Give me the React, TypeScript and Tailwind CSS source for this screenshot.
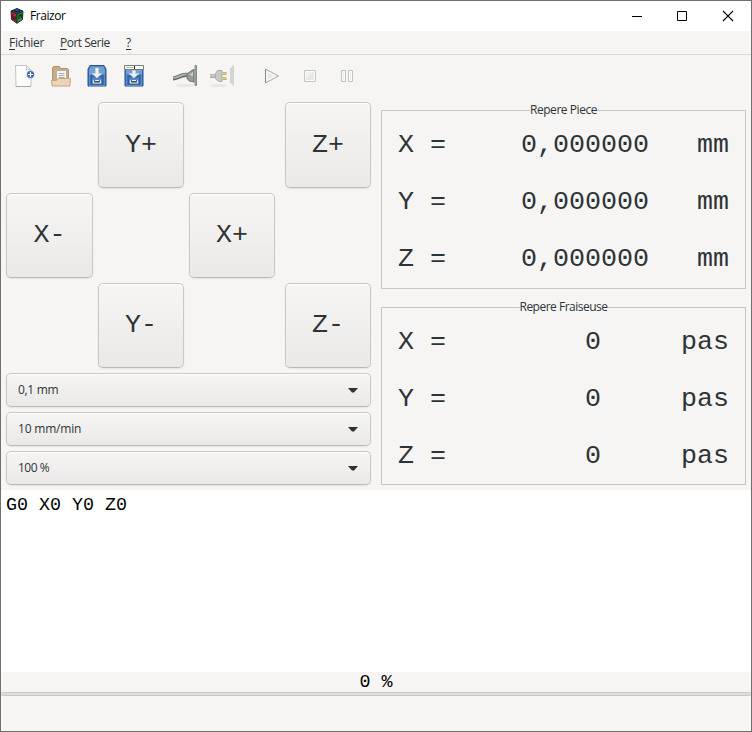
import React from "react";

const mono = "font-['Liberation_Mono',monospace]";
const ui = "font-['Open_Sans','Noto_Sans',sans-serif]";

function Logo() {
  return (
    <svg width="14" height="16" viewBox="0 0 14 16">
      <path d="M7 .5 12.6 3 7 6.2 1.2 3z" fill="#2f5592" stroke="#16233f" />
      <path d="M1 3.3 7 6.5v8.7L1.6 11.6z" fill="#c92f37" stroke="#38181c" />
      <path d="M13 3.3 7 6.5v8.7l5.4-3.6z" fill="#26a036" stroke="#12351b" />
      <path d="M4 2.5 7.2 4 10 2.4M3 6.2v4.2l2 1.2V8.2M9 11V7.8l2.2-1.2v3.5" fill="none" stroke="#171d28" strokeWidth="1.2" />
    </svg>
  );
}

function NewIcon() {
  return (
    <svg width="24" height="24" viewBox="0 0 24 24">
      <path d="M3.5 1.5h11l4.500 4.500v16.500h-15z" fill="#fcfcfb" stroke="#c3c5c0" />
      <path d="M4 22.5h14.500" stroke="#a4a6a1" />
      <path d="M14 1.500c.8 2 .6 3.500 0 4.500 1.500-.5 3.500-.3 4.500.3" fill="#ebebea" stroke="#c5c7c2" />
      <circle cx="18.500" cy="10.500" r="3.900" fill="#8fadd2" />
      <circle cx="18.500" cy="10.500" r="3.200" fill="#3465a4" />
      <path d="M18.500 8v5M16 10.500h5" stroke="#fff" strokeWidth="1.200" />
    </svg>
  );
}

function OpenIcon() {
  return (
    <svg width="24" height="24" viewBox="0 0 24 24">
      <path d="M3.500 21V4l1-1.500h6l1.200 2H18.500l1 1V21z" fill="#c9ad82" stroke="#b0956c" />
      <path d="M7.500 6.500h10v9h-10z" fill="#f8f8f7" stroke="#b1afa8" />
      <path d="M9.500 9.500h6M9.500 11.500h6M9.500 13.500h6" stroke="#a9aaa7" />
      <path d="M2.500 16.500h5l2-2h12l-.6 7.500H3.200z" fill="#ecd4b5" stroke="#c4a77f" />
    </svg>
  );
}

function SaveIcon({ as = false }: { as?: boolean }) {
  return (
    <svg width="24" height="24" viewBox="0 0 24 24">
      <path d="M5 1.500h14l2 3.500v17h-18V5z" fill="#3b70b5" stroke="#285592" strokeLinejoin="round" />
      <path d="M5.500 2.500h13l1.500 3v5H4v-5z" fill="#759fd2" />
      <path d="M4.500 11v10.500h15V11" fill="none" stroke="#5d8dc7" />
      <path d="M6.500 12.500h11v7.500h-11z" fill="#4a7fc1" stroke="#2d5d9c" />
      {as ? (
        <>
          <path d="M2.500 1.500h19v4h-19z" fill="#fff" stroke="#777b76" />
          <path d="M4 3.500h7" stroke="#b5b6b2" />
          <path d="M12.500 2v3" stroke="#222" />
        </>
      ) : null}
      <path
        d={as ? "M10.500 6.500h3v3h3.500L12 14l-5-4.500h3.500z" : "M10.500 4h3v5.500h3.500L12 14l-5-4.500h3.500z"}
        fill="#eff1f1"
        stroke="#c7d1dc"
        strokeWidth=".7"
      />
      <path d="M8.500 15.500v3.500h7v-3.500z" fill="#33475f" stroke="#eef0f1" strokeWidth="1.200" />
      <path d="M8 15.700h8" stroke="#4a7fc1" strokeWidth="1.200" />
      <path d="M10 16.500h4" stroke="#eef0f1" />
    </svg>
  );
}

function ConnectIcon() {
  return (
    <svg width="26" height="24" viewBox="0 0 26 24">
      <ellipse cx="12" cy="21.500" rx="9" ry="1.600" fill="#e8e7e5" />
      <path d="M0 14.500c5 0 7-4 14-3.500" fill="none" stroke="#666965" strokeWidth="4.200" />
      <path d="M.5 14c5 0 7-4 14-3.500" fill="none" stroke="#b3b6b1" strokeWidth="1.800" />
      <path d="M14 9.500c2-.4 4-3 7-4.200v12.700c-3.500-.3-6-1-7-4z" fill="#999d98" stroke="#6e716d" />
      <path d="M16 10.500c2 0 2.500-1.500 4-2.500v4z" fill="#d4d6d2" />
      <path d="M22 1.500h1.500v20H22z" fill="#b1b5ac" stroke="#868b82" />
    </svg>
  );
}

function DisconnectIcon() {
  return (
    <svg width="26" height="24" viewBox="0 0 26 24">
      <ellipse cx="8.500" cy="21.500" rx="8.500" ry="1.600" fill="#e8e7e5" />
      <path d="M0 12h7" stroke="#aeb0ac" strokeWidth="4" />
      <path d="M0 11.500h7" stroke="#d1d2cf" strokeWidth="1.500" />
      <path d="M5.500 9.500 7.500 6.500H12v11H9.500q-3-1-4-3z" fill="#c8cac6" stroke="#a9aca7" />
      <path d="M12.500 9.500h4M12.500 14.500h4" stroke="#b9aa70" strokeWidth="3" />
      <path d="M12.500 9.300h3.500M12.500 14.300h3.500" stroke="#ead873" strokeWidth="1.300" />
      <path d="M23 1.500v20M22 4.500h-1v14h1" fill="none" stroke="#c8cac5" strokeWidth="1.500" />
    </svg>
  );
}

function PlayIcon() {
  return (
    <svg width="24" height="24" viewBox="0 0 24 24">
      <path d="M5.500 5v14L18.500 12z" fill="#f0f0ee" stroke="#a4a7a1" strokeLinejoin="round" />
      <path d="M7 7.500v9L15.500 12z" fill="#e7e8e5" stroke="#fff" />
      <path d="M5.500 5v14" stroke="#858981" />
    </svg>
  );
}

function StopIcon() {
  return (
    <svg width="24" height="24" viewBox="0 0 24 24">
      <path d="M6.500 6.500h11v11h-11z" fill="#e7e7e5" stroke="#c6c8c4" />
      <path d="M7.500 7.500h9v9h-9z" fill="none" stroke="#fbfbfa" />
      <path d="M8 15V8h8z" fill="#f0f0ee" />
    </svg>
  );
}

function PauseIcon() {
  return (
    <svg width="24" height="24" viewBox="0 0 24 24" fill="#ededeb" stroke="#c3c5c0">
      <path d="M6.500 6.500h4v11h-4zM13.500 6.500h4v11h-4z" />
      <path d="M7.500 7.500h2v9h-2zM14.500 7.500h2v9h-2z" stroke="#fafaf9" />
    </svg>
  );
}

const raised =
  "border border-[#cdc7c2] border-b-[#bfb8b1] bg-linear-to-b from-[#f6f5f4] to-[#eae9e7] rounded-[5px] shadow-[inset_0_1px_0_#fff,0_1px_2px_rgba(0,0,0,0.07)]";

function Jog({ label, place }: { label: string; place: string }) {
  return (
    <button className={`${raised} ${mono} ${place} flex items-center justify-center text-[26.67px] leading-none text-[#2e3436]`}>
      {label}
    </button>
  );
}

function Combo({ label, spacing }: { label: string; spacing: string }) {
  return (
    <button className={`${raised} ${ui} flex h-[34px] w-full items-center justify-between pr-3 pl-[11px] text-[12px] text-[#2e3436]`}>
      <span className={spacing}>{label}</span>
      <svg width="10" height="5" viewBox="0 0 10 5">
        <path d="M0 0h10L6 4.500H4z" fill="#2e3436" />
      </svg>
    </button>
  );
}

function Frame({ title, value, valueBox, unit, box, spacing }: { title: string; value: string; valueBox: string; unit: string; box: string; spacing: string }) {
  return (
    <section className={`relative flex flex-col border border-[#c9c6bf] pr-4 pl-4 ${box}`}>
      <h2 className={`${ui} ${spacing} absolute top-[-9px] left-1/2 -translate-x-1/2 bg-[#f6f5f4] text-[12px] leading-4 whitespace-nowrap text-[#2e3436]`}>
        {title}
      </h2>
      {["X", "Y", "Z"].map((axis) => (
        <div key={axis} className={`${mono} flex h-[57px] items-center text-[26.67px] leading-none whitespace-pre text-[#2e3436] last:h-[56px]`}>
          <span>{axis} =</span>
          <span className={`${valueBox} text-right`}>{value}</span>
          <span className="flex-1 text-right">{unit}</span>
        </div>
      ))}
    </section>
  );
}

export default function App() {
  return (
    <div className="flex h-[732px] w-[752px] flex-col overflow-hidden border border-[#707070] bg-[#f6f5f4]">
      <header className="flex h-[30px] shrink-0 items-center bg-white pl-[9px] text-black">
        <Logo />
        <span className={`${ui} ml-1.5 flex-1 text-[12px] tracking-[-0.42px]`}>Fraizor</span>
        <div className="flex items-center">
          <svg width="46" height="29" viewBox="0 0 46 29" stroke="#000"><path d="M19 14.500h10" /></svg>
          <svg width="46" height="29" viewBox="0 0 46 29" fill="none" stroke="#000"><path d="M18.500 9.500h9v9h-9z" /></svg>
          <svg width="46" height="29" viewBox="0 0 46 29" stroke="#000" strokeWidth="1.100"><path d="m18 9 10 10M28 9 18 19" /></svg>
        </div>
      </header>

      <nav className={`${ui} flex h-6 shrink-0 items-center border-b border-[#d9d7d4] pl-2 text-[12px] text-[#2e3436]`}>
        <span className="w-[51px] tracking-[-0.25px]"><u className="underline-offset-2">F</u>ichier</span>
        <span className="w-[66px] tracking-[-0.5px]"><u className="underline-offset-2">P</u>ort Serie</span>
        <u className="underline-offset-2">?</u>
      </nav>

      <div className="flex h-[47px] shrink-0 items-start pt-[9px] pl-[11px]">
        <div className="flex gap-[12.5px]">
          <NewIcon />
          <OpenIcon />
          <SaveIcon />
          <SaveIcon as />
        </div>
        <div className="ml-[27.5px] flex gap-[11px]">
          <ConnectIcon />
          <DisconnectIcon />
        </div>
        <div className="ml-6 flex gap-[13.5px]">
          <PlayIcon />
          <StopIcon />
          <PauseIcon />
        </div>
      </div>

      <main className="flex h-[388px] shrink-0 pl-[5px]">
        <div className="flex w-[365px] flex-col gap-[5px]">
          <div className="grid h-[266px] grid-cols-[87px_86px_86px_5px_81px] grid-rows-[86px_85px_85px] gap-[5px]">
            <Jog label="Y+" place="col-start-2 row-start-1" />
            <Jog label="Z+" place="col-start-4 col-span-2 row-start-1 ml-[5px] w-[86px]" />
            <Jog label="X-" place="col-start-1 row-start-2" />
            <Jog label="X+" place="col-start-3 row-start-2" />
            <Jog label="Y-" place="col-start-2 row-start-3" />
            <Jog label="Z-" place="col-start-4 col-span-2 row-start-3 ml-[5px] w-[86px]" />
          </div>
          <Combo label="0,1 mm" spacing="tracking-[-0.3px]" />
          <Combo label="10 mm/min" spacing="tracking-[-0.2px]" />
          <Combo label="100 %" spacing="tracking-[-0.5px]" />
        </div>
        <div className="ml-[10px] flex w-[365px] flex-col gap-[18px] pt-2">
          <Frame title="Repere Piece" value="0,000000" valueBox="w-[203px]" unit="mm" box="h-[179px] pt-[6px]" spacing="tracking-[-0.45px]" />
          <Frame title="Repere Fraiseuse" value="0" valueBox="w-[155px]" unit="pas" box="h-[178px] pt-[6px]" spacing="tracking-[-0.5px]" />
        </div>
      </main>

      <div className={`${mono} h-[182px] shrink-0 bg-white pt-[5px] pl-[5px] text-[18.33px] leading-[21px] text-black`}>
        G0 X0 Y0 Z0
      </div>
      <footer>
        <div className={`${mono} h-5 text-center text-[18.33px] leading-[22px] text-black`}>0 %</div>
        <div className="h-1 rounded-xs border-y border-[#cdc7c2] bg-[#dfddda]" />
      </footer>
    </div>
  );
}
